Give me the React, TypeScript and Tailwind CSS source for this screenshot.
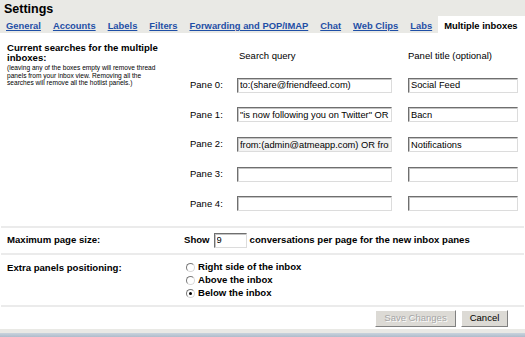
import React from "react";

const inputCls =
  "h-[15px] border border-t-[#6f6f6f] border-l-[#6f6f6f] border-b-[#dcdcdc] border-r-[#dcdcdc] shadow-[inset_1px_1px_0_#c4c4c4] px-[2px] text-[9.3px] leading-[13px] text-black outline-none font-['Liberation_Sans',Arial,sans-serif] font-normal";

function Field({ value, w, gray }: { value: string; w: string; gray?: boolean }) {
  return (
    <input
      readOnly
      defaultValue={value}
      className={`${inputCls} ${w} ${gray ? "bg-[#f3f3f3]" : "bg-white"}`}
    />
  );
}

function Radio({ checked, label }: { checked?: boolean; label: string }) {
  return (
    <div className="flex items-center h-[13px]">
      <span className="w-[9px] h-[9px] rounded-full border border-t-[#7a7a7a] border-l-[#7a7a7a] border-b-[#d8d8d8] border-r-[#d8d8d8] bg-white flex items-center justify-center mr-[3px]">
        {checked && <span className="w-[3px] h-[3px] rounded-full bg-black" />}
      </span>
      <span className="font-bold">{label}</span>
    </div>
  );
}

const tabs = ["General", "Accounts", "Labels", "Filters", "Forwarding and POP/IMAP", "Chat", "Web Clips", "Labs"];

const panes = [
  { q: "to:(share@friendfeed.com)", t: "Social Feed" },
  { q: "\"is now following you on Twitter\" OR from:(twitter)", t: "Bacn" },
  { q: "from:(admin@atmeapp.com) OR from:(noreply@facebook.com)", t: "Notifications", gray: true },
  { q: "", t: "" },
  { q: "", t: "" },
];

export default function App() {
  return (
    <div className="w-[525px] h-[337px] overflow-hidden bg-[#e9e9e5] flex flex-col text-black font-['Liberation_Sans',Arial,sans-serif]">
      <div className="h-[16px] pl-[4px] text-[12.5px] font-bold leading-[16px] pt-[1px]">Settings</div>
      <div className="h-[17px] flex items-stretch pl-[6px] text-[9.4px] font-bold whitespace-nowrap">
        <div className="flex items-center gap-[12px] pt-[3px]">
          {tabs.map((t) => (
            <span key={t} className="text-[#1f4fa6] underline underline-offset-[1px]">
              {t}
            </span>
          ))}
        </div>
        <div className="ml-[6px] flex-1 bg-white flex items-center pl-[6px] pt-[3px]">Multiple inboxes</div>
      </div>
      <div className="bg-white flex-1 flex flex-col">
        <div className="flex pt-[8px] pb-[7px]">
          <div className="w-[180px] pl-[7px] pt-[2px]">
            <div className="text-[9.6px] font-bold leading-[10px]">
              Current searches for the multiple
              <br />
              inboxes:
            </div>
            <div className="text-[6.6px] leading-[7.5px] mt-[1px]">
              (leaving any of the boxes empty will remove thread
              <br />
              panels from your inbox view. Removing all the
              <br />
              searches will remove all the hotlist panels.)
            </div>
          </div>
          <div className="flex flex-col text-[9.5px]">
            <div className="h-[29.6px] flex items-center">
              <div className="w-[57px]" />
              <div className="w-[171px] pl-[2px]">Search query</div>
              <div>Panel title (optional)</div>
            </div>
            {panes.map((p, i) => (
              <div key={i} className="h-[29.6px] flex items-center">
                <div className="w-[57px] pl-[10px]">Pane {i}:</div>
                <Field value={p.q} w="w-[155px]" gray={p.gray} />
                <div className="w-[16px]" />
                <Field value={p.t} w="w-[110px]" />
              </div>
            ))}
          </div>
        </div>
        <div className="h-[2px] bg-[#ebebeb] mx-[1px]" />
        <div className="h-[25px] flex items-center text-[9.6px] font-bold">
          <div className="w-[184px] pl-[7px]">Maximum page size:</div>
          <span>Show</span>
          <Field value="9" w="w-[33px] ml-[4px] mr-[3px]" />
          <span>conversations per page for the new inbox panes</span>
        </div>
        <div className="h-[2px] bg-[#ebebeb] mx-[1px]" />
        <div className="flex pt-[6px] pb-[5px] text-[9.6px]">
          <div className="w-[186px] pl-[7px] font-bold leading-[13px]">Extra panels positioning:</div>
          <div className="flex flex-col">
            <Radio label="Right side of the inbox" />
            <Radio label="Above the inbox" />
            <Radio checked label="Below the inbox" />
          </div>
        </div>
        <div className="h-[2px] bg-[#ebebeb] mx-[1px]" />
        <div className="flex justify-end gap-[5px] pt-[3px] pr-[17px] text-[9.5px]">
          <div className="h-[17px] w-[81px] bg-[#dcdad5] border border-t-white border-l-white border-b-[#808080] border-r-[#808080] flex items-center justify-center text-[#a5a5a5] [text-shadow:1px_1px_0_#ffffff]">
            Save Changes
          </div>
          <div className="h-[17px] w-[47px] bg-[#dcdad5] border border-t-white border-l-white border-b-[#808080] border-r-[#808080] flex items-center justify-center">
            Cancel
          </div>
        </div>
      </div>
      <div className="h-[4px] bg-[#e9e9e5]" />
      <div className="h-[4px] bg-gradient-to-b from-[#c9d3dd] to-[#aebccb]" />
    </div>
  );
}
